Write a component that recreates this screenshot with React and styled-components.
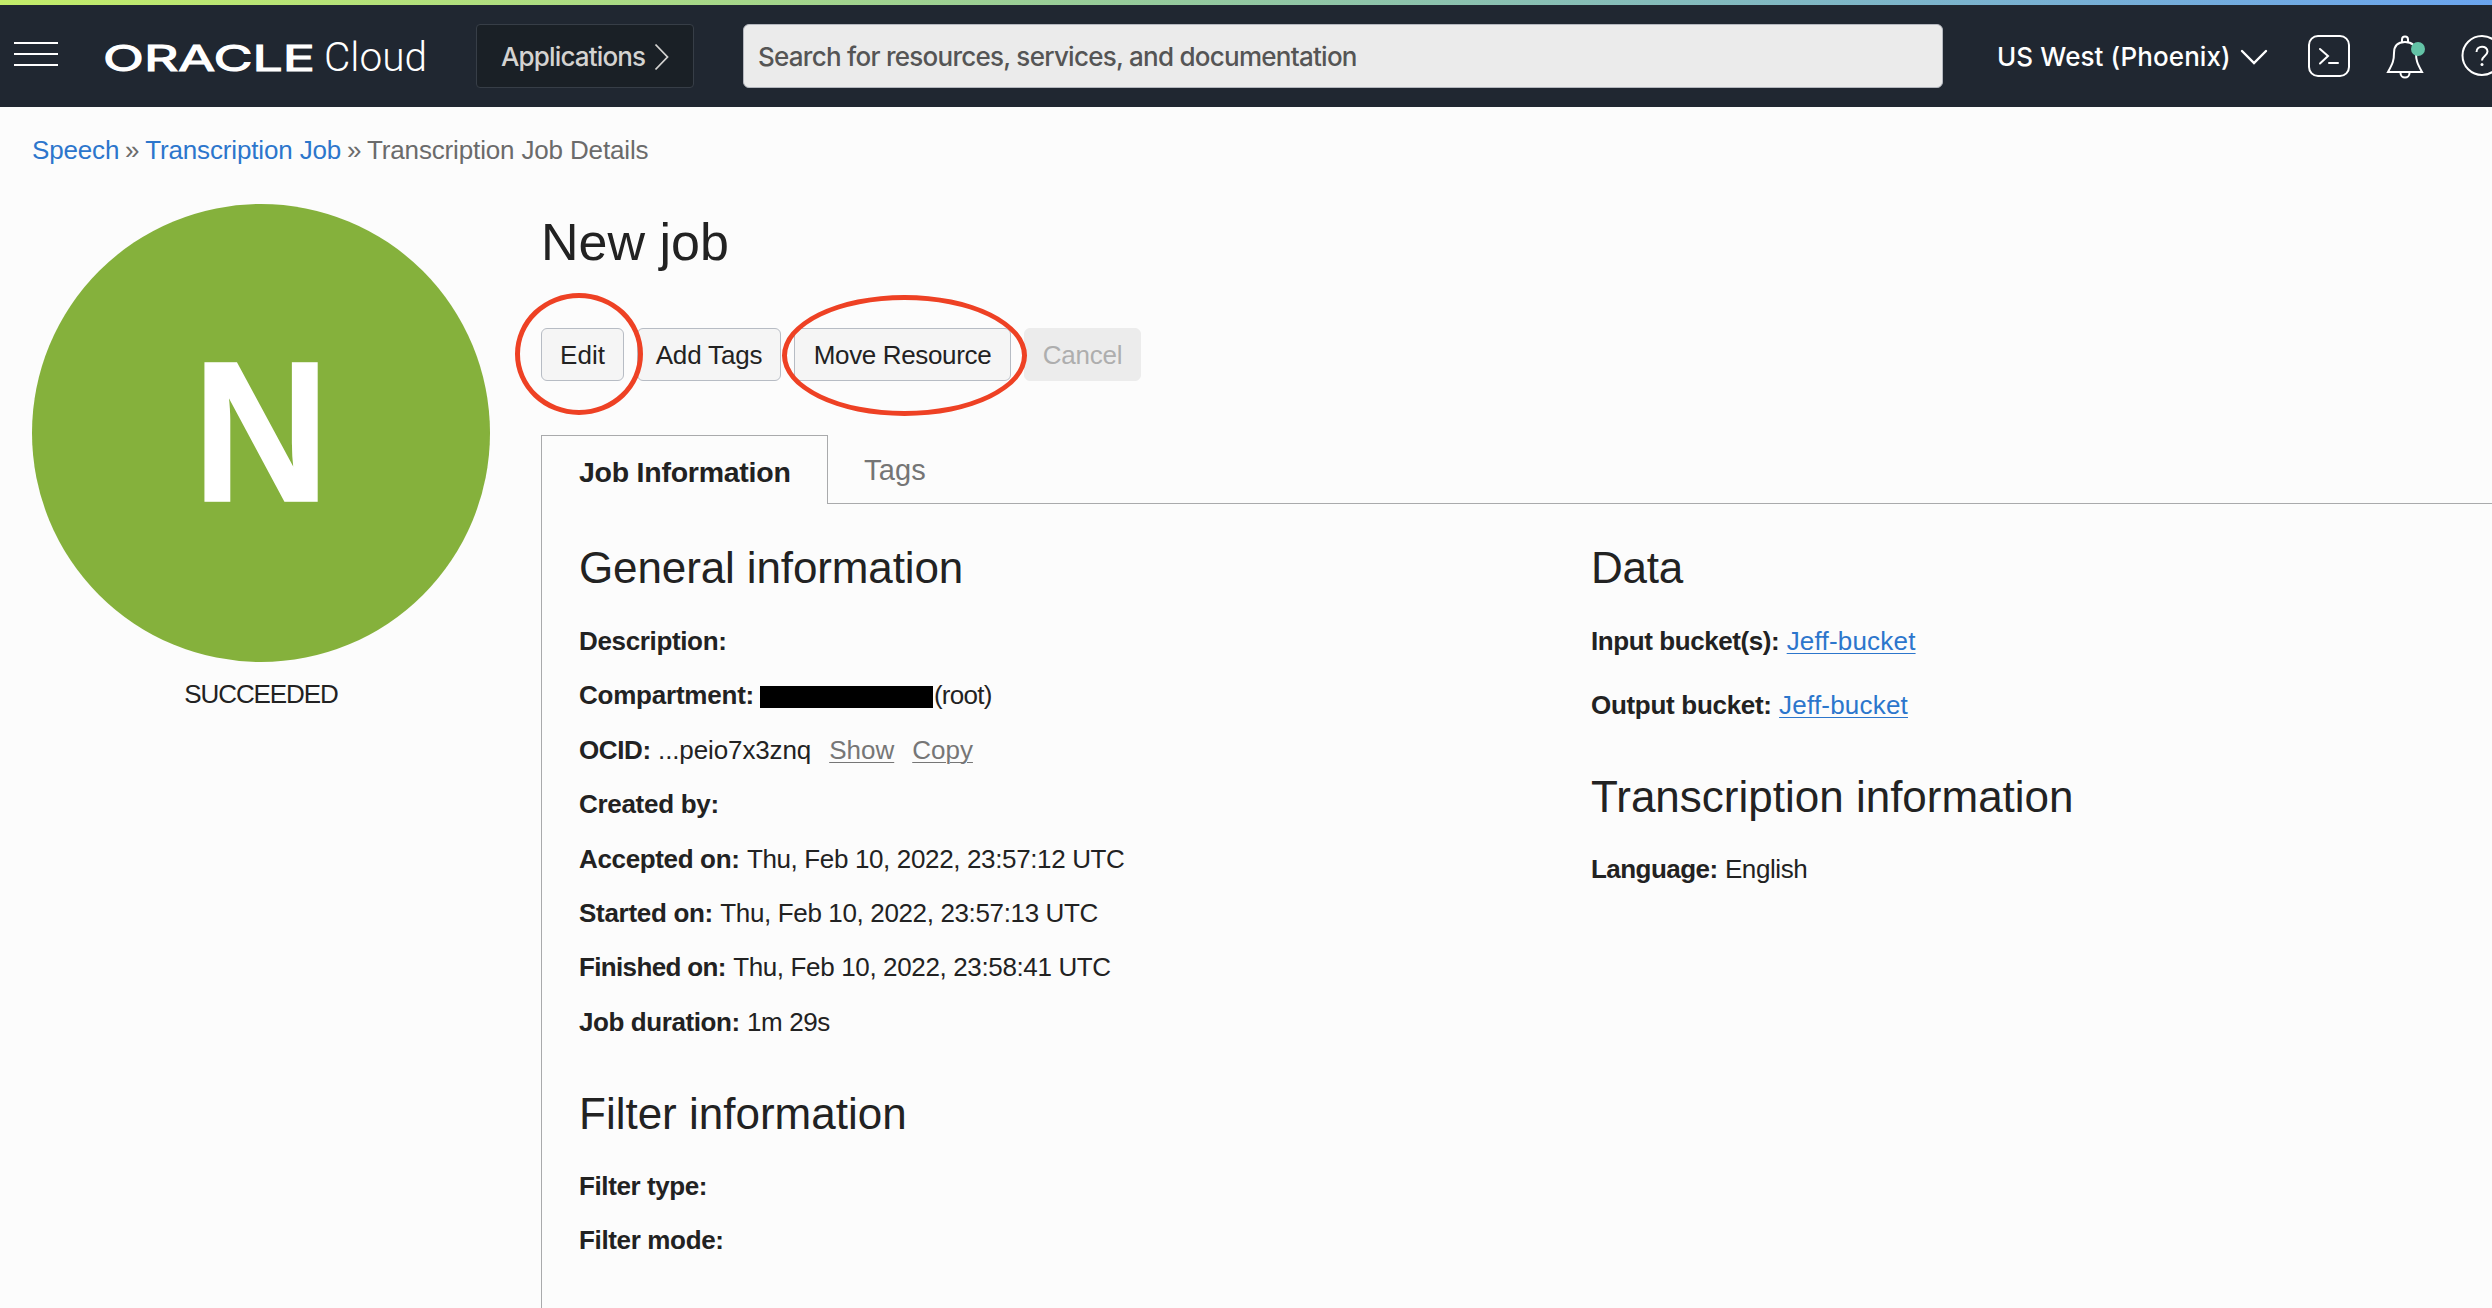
import React from "react";
import styled, { createGlobalStyle } from "styled-components";

const sans = `"Liberation Sans", Arial, Helvetica, sans-serif`;
const ui = `Inter, "Liberation Sans", sans-serif`;

const Global = createGlobalStyle`
  * { box-sizing: border-box; }
  html, body { margin: 0; background: #fcfcfc; overflow: hidden; }
  body { font-family: ${sans}; font-size: 26px; line-height: 32px; color: #222; }
`;

const Page = styled.div`
  display: flex; flex-direction: column; width: 2492px; height: 1308px; overflow: hidden;
`;
const Stripe = styled.div`
  flex: none; height: 5px; background: linear-gradient(90deg, #c3ec6a, #96cb9a 45%, #6aa4ee);
`;
const Header = styled.header`
  flex: none; display: flex; align-items: flex-start; height: 102px; padding: 19px 0 0 14px;
  background: #202731; font-family: ${ui}; color: #fff;
`;
const MenuButton = styled.div`
  display: flex; flex-direction: column; justify-content: space-between;
  width: 44px; height: 24px; margin-top: 18px;
`;
const MenuLine = styled.span`height: 2px; background: #fff;`;
const Logo = styled.svg`display: block; flex: none; margin-left: 42px; width: 340px; height: 64px;`;
const AppsButton = styled.div`
  flex: none; display: flex; align-items: center; width: 218px; height: 64px; margin-left: 36px;
  padding: 2px 0 0 24px; border: 1px solid #373e47; border-radius: 4px; background: #1a2026; color: #d4d3d1;
`;
const HeaderText = styled.span`
  white-space: nowrap; font-size: 26px; font-weight: ${p => p.$weight || 400};
  letter-spacing: ${p => p.$track || 0}px;
`;
const Search = styled.div`
  flex: none; display: flex; align-items: center; width: 1200px; height: 64px; margin-left: 49px;
  padding: 2px 0 0 14px; border: 1px solid #b4b7be; border-radius: 6px; background: #ebebeb; color: #555;
`;
const Region = styled.div`
  flex: none; display: flex; align-items: center; width: 270px; height: 64px; margin-left: 54px; padding-top: 2px;
`;
const Icons = styled.svg`display: block; flex: none; width: 192px; height: 64px; margin-left: 33px;`;
const Chevron = styled.svg`display: block; flex: none; margin-left: ${p => p.$gap}px; fill: none;`;

const Crumbs = styled.nav`
  flex: none; display: flex; gap: 5.8px; height: 97px; padding: 27px 0 0 32px; color: #6b6b6b;
  letter-spacing: -0.15px;
`;
const Crumb = styled.span`white-space: nowrap; color: ${p => (p.$link ? "#2c76cc" : "inherit")};`;

const Body = styled.div`flex: 1; display: flex; min-height: 0;`;
const Side = styled.aside`
  flex: none; width: 458px; margin-left: 32px; display: flex; flex-direction: column; align-items: center;
`;
const Avatar = styled.div`
  display: flex; align-items: center; justify-content: center; width: 458px; height: 458px; border-radius: 50%;
  background: #85b13c; color: #fff; font-size: 200px; line-height: 200px; font-weight: 700; padding-bottom: 3px;
`;
const Initial = styled.span`display: block; transform: scaleX(0.95); -webkit-text-stroke: 1.5px #fff;`;
const Status = styled.div`margin-top: 16px; letter-spacing: -1.1px;`;
const Main = styled.main`flex: 1; margin-left: 51px; display: flex; flex-direction: column; min-width: 0;`;
const Title = styled.h1`margin: 8px 0 0 0; font-size: 52px; line-height: 60px; font-weight: 400;`;
const Actions = styled.div`position: relative; display: flex; gap: 13px; margin-top: 56px; height: 53px;`;
const Button = styled.div`
  flex: none; display: flex; align-items: center; justify-content: center; width: ${p => p.$w}px; height: 53px;
  border-radius: 6px; border: 1px solid ${p => (p.$off ? "#ececec" : "#b7bcc4")};
  background: ${p => (p.$off ? "#ececec" : "#f5f5f5")}; color: ${p => (p.$off ? "#aeaeae" : "#222")};
  letter-spacing: ${p => p.$track || 0}px; white-space: nowrap; padding-top: 1px;
`;
const Ring = styled.div`
  position: absolute; left: ${p => p.$x}px; top: ${p => p.$y}px; width: ${p => p.$w}px; height: ${p => p.$h}px;
  border: 5px solid #ee4124; border-radius: 50%;
`;
const Tabs = styled.div`display: flex; margin-top: 54px; height: 69px;`;
const ActiveTab = styled.div`
  flex: none; width: 287px; padding: 20px 0 0 37px; border: 1px solid #a9aaac; border-bottom: 0;
  font-size: 28.5px; font-weight: 700; letter-spacing: -0.25px; white-space: nowrap;
`;
const TabRest = styled.div`
  flex: 1; height: 69px; padding: 19px 0 0 36px; border-bottom: 1px solid #a9aaac; color: #757575; font-size: 29px;
  letter-spacing: 0.2px;
`;
const Panel = styled.div`flex: 1; display: flex; border-left: 1px solid #a9aaac; padding: 38px 0 0 37px;`;
const Column = styled.section`flex: none; width: 1012px;`;
const Heading = styled.h2`
  margin: ${p => p.$top || 0}px 0 0; font-size: 44px; line-height: 52px; font-weight: 400; white-space: nowrap;
  letter-spacing: ${p => p.$track || 0}px;
`;
const Rows = styled.div`
  display: flex; flex-direction: column; gap: ${p => p.$gap}px; margin-top: ${p => p.$top || 31}px;
`;
const Row = styled.div`display: flex; align-items: center; height: 32px; white-space: nowrap;`;
const Label = styled.b`letter-spacing: ${p => p.$track || 0}px; margin-right: 7.4px;`;
const Value = styled.span`letter-spacing: ${p => p.$track || 0}px;`;
const Redacted = styled.span`width: 173px; height: 22px; background: #000; margin: 3px 0.5px 0 -1px;`;
const Link = styled.span`
  color: ${p => (p.$grey ? "#767676" : "#2c76cc")}; margin-left: ${p => p.$gap || 0}px;
  letter-spacing: ${p => p.$track || 0}px;
  text-decoration: underline; text-decoration-thickness: 1px; text-underline-offset: 3px;
`;

const Field = ({ label, lt, track, children }) => (
  <Row><Label $track={lt}>{label}</Label><Value $track={track}>{children}</Value></Row>
);

export default function App() {
  return (
    <>
      <Global />
      <Page>
        <Stripe />
        <Header>
          <MenuButton><MenuLine /><MenuLine /><MenuLine /></MenuButton>
          <Logo viewBox="100 24 340 64" fill="#fff">
            <text x="103" y="70.5" fontFamily="Inter, sans-serif" fontWeight="400" fontSize="36" stroke="#fff" strokeWidth="1.1" textLength="212" lengthAdjust="spacingAndGlyphs">ORACLE</text>
            <text x="324" y="71" fontFamily="Roboto, sans-serif" fontWeight="300" fontSize="41" textLength="103" lengthAdjust="spacingAndGlyphs">Cloud</text>
          </Logo>
          <AppsButton>
            <HeaderText $weight={450} $track={-0.85}>Applications</HeaderText>
            <Chevron $gap={9} width="16" height="28" viewBox="0 0 16 28" stroke="#d4d3d1" strokeWidth="1.8"><path d="M1.5 1.5 L13.5 14 L1.5 26.5" /></Chevron>
          </AppsButton>
          <Search><HeaderText $weight={450} $track={-0.74}>Search for resources, services, and documentation</HeaderText></Search>
          <Region>
            <HeaderText $weight={500} $track={0.1}>US West (Phoenix)</HeaderText>
            <Chevron $gap={9} width="28" height="16" viewBox="0 0 28 16" stroke="#fff" strokeWidth="2.4"><path d="M2 2 L14 14 L26 2" strokeLinecap="round" /></Chevron>
          </Region>
          <Icons viewBox="2300 24 192 64" fill="none" stroke="#fff" strokeWidth="2">
            <rect x="2309" y="36" width="40" height="40" rx="9" />
            <path d="M2320 49 L2328 56 L2320 63.5 M2329 63 H2338" strokeLinecap="round" />
            <path d="M2388 72 H2422 C2417 63 2416 60 2416 53 C2416 45 2411 42 2405 42 C2399 42 2394 45 2394 53 C2394 60 2393 63 2388 72 Z M2402 42 V39.500 A3 3 0 0 1 2408 39.500 V42 M2400.500 73 A4.500 4.500 0 0 0 2409.500 73" />
            <circle cx="2418" cy="49" r="7" fill="#63c3a6" stroke="none" />
            <circle cx="2482" cy="55.500" r="19.500" />
            <path d="M2476.500 52 C2476.500 45 2487.500 45 2487.500 51.500 C2487.500 56 2482 56 2482 60.500" />
            <circle cx="2482" cy="64.500" r="1.500" fill="#fff" stroke="none" />
          </Icons>
        </Header>
        <Crumbs>
          <Crumb $link>Speech</Crumb><Crumb>»</Crumb><Crumb $link>Transcription Job</Crumb><Crumb>»</Crumb>
          <Crumb>Transcription Job Details</Crumb>
        </Crumbs>
        <Body>
          <Side>
            <Avatar><Initial>N</Initial></Avatar>
            <Status>SUCCEEDED</Status>
          </Side>
          <Main>
            <Title>New job</Title>
            <Actions>
              <Button $w={83}>Edit</Button>
              <Button $w={144} $track={-0.15}>Add Tags</Button>
              <Button $w={217} $track={-0.35}>Move Resource</Button>
              <Button $w={117} $off $track={-0.2}>Cancel</Button>
              <Ring $x={-26} $y={-35} $w={128} $h={122} />
              <Ring $x={241} $y={-33} $w={245} $h={121} />
            </Actions>
            <Tabs>
              <ActiveTab>Job Information</ActiveTab>
              <TabRest>Tags</TabRest>
            </Tabs>
            <Panel>
              <Column>
                <Heading $track={-0.12}>General information</Heading>
                <Rows $gap={22.4}>
                  <Field label="Description:" lt={-0.35} />
                  <Row><Label $track={-0.22}>Compartment:</Label><Redacted /><Value $track={-0.75}>(root)</Value></Row>
                  <Row>
                    <Label $track={-0.4}>OCID:</Label><Value $track={-0.12}>...peio7x3znq</Value>
                    <Link $grey $gap={18}>Show</Link><Link $grey $gap={18}>Copy</Link>
                  </Row>
                  <Field label="Created by:" lt={-0.3} />
                  <Field label="Accepted on:" lt={-0.35} track={-0.36}>Thu, Feb 10, 2022, 23:57:12 UTC</Field>
                  <Field label="Started on:" lt={-0.3} track={-0.36}>Thu, Feb 10, 2022, 23:57:13 UTC</Field>
                  <Field label="Finished on:" lt={-0.65} track={-0.36}>Thu, Feb 10, 2022, 23:58:41 UTC</Field>
                  <Field label="Job duration:" lt={-0.42} track={-0.4}>1m 29s</Field>
                </Rows>
                <Heading $top={50}>Filter information</Heading>
                <Rows $gap={22.4} $top={30.2}>
                  <Field label="Filter type:" lt={-0.4} />
                  <Field label="Filter mode:" lt={-0.35} />
                </Rows>
              </Column>
              <Column>
                <Heading $track={-0.2}>Data</Heading>
                <Rows $gap={32}>
                  <Row><Label $track={-0.42}>Input bucket(s):</Label><Link $track={0.2}>Jeff-bucket</Link></Row>
                  <Row><Label $track={-0.3}>Output bucket:</Label><Link $track={0.2}>Jeff-bucket</Link></Row>
                </Rows>
                <Heading $top={50}>Transcription information</Heading>
                <Rows $gap={22} $top={30}>
                  <Field label="Language:" lt={-0.55} track={-0.4}>English</Field>
                </Rows>
              </Column>
            </Panel>
          </Main>
        </Body>
      </Page>
    </>
  );
}
